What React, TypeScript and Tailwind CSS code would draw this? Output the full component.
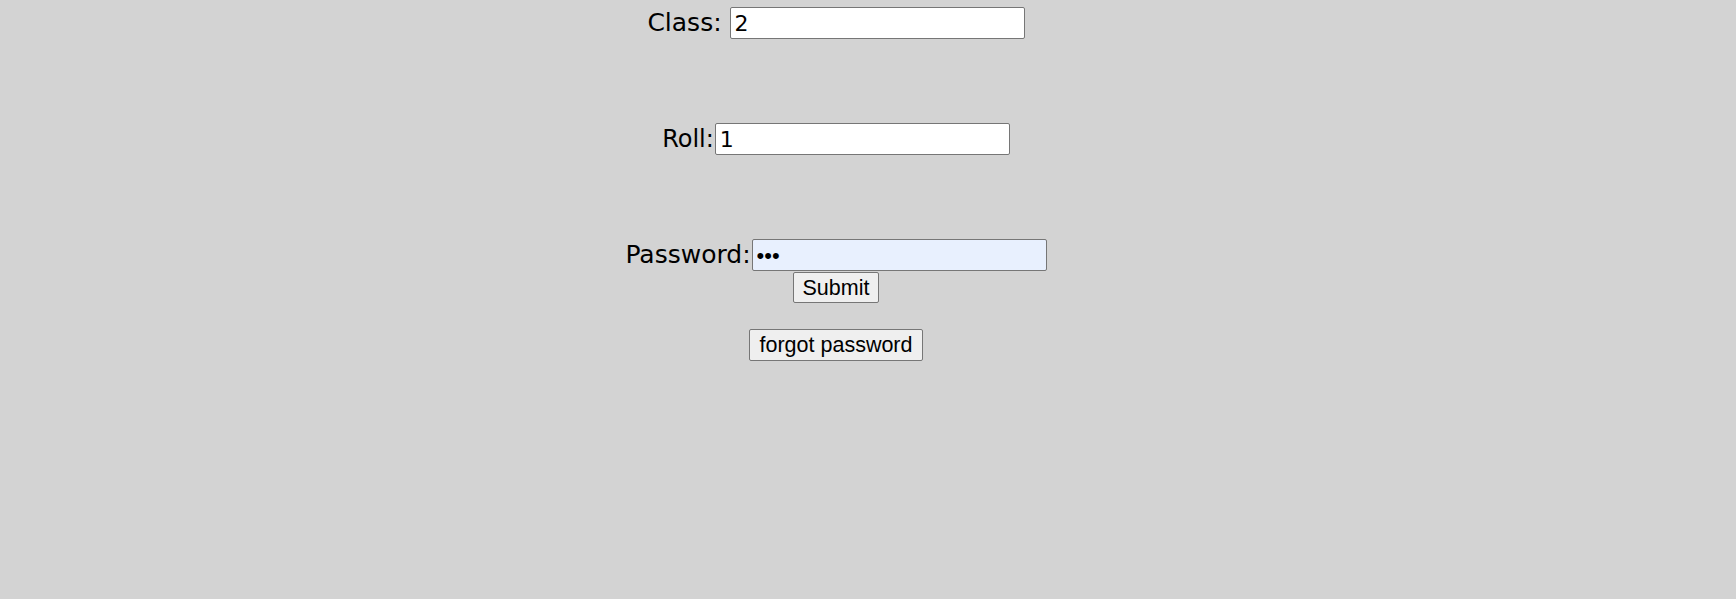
import React from "react";

function Field({
  label,
  value,
  type = "text",
  gap = "",
  size = "text-[24px]",
  filled = false,
}: {
  label: string;
  value: string;
  type?: string;
  gap?: string;
  size?: string;
  filled?: boolean;
}) {
  return (
    <div className={`flex items-baseline justify-center ${gap}`}>
      <label className={`${size} leading-[28px] text-black`}>{label}</label>
      <input
        type={type}
        defaultValue={value}
        className={`h-[32px] w-[295px] rounded-[2px] border border-[#767676] px-[4px] text-[22px] text-black outline-none ${
          filled ? "bg-[#e8f0fe]" : "bg-white"
        }`}
        style={type === "password" ? { fontFamily: '"Liberation Sans", Arial, sans-serif' } : undefined}
      />
    </div>
  );
}

export default function App() {
  return (
    <div
      className="min-h-[599px] w-full bg-[#d3d3d3] pr-16 pt-[7px]"
      style={{ fontFamily: '"DejaVu Sans", sans-serif' }}
    >
      <div className="flex flex-col items-center">
        <Field label="Class:" value="2" gap="gap-[8px]" size="text-[25px]" />
        <div className="h-[84px]" />
        <Field label="Roll:" value="1" gap="gap-[1px]" />
        <div className="h-[84px]" />
        <Field label="Password:" value="abc" type="password" gap="gap-[1px]" size="text-[25px]" filled />
        <button
          className="mt-[1px] h-[31px] w-[86px] rounded-[2px] border border-[#767676] bg-[#efefef] text-[21.5px] leading-[24px] text-black"
          style={{ fontFamily: '"Liberation Sans", Arial, sans-serif' }}
        >
          Submit
        </button>
        <button
          className="mt-[26px] h-[32px] w-[174px] rounded-[2px] border border-[#767676] bg-[#efefef] text-[21.5px] leading-[24px] text-black"
          style={{ fontFamily: '"Liberation Sans", Arial, sans-serif' }}
        >
          forgot password
        </button>
      </div>
    </div>
  );
}
